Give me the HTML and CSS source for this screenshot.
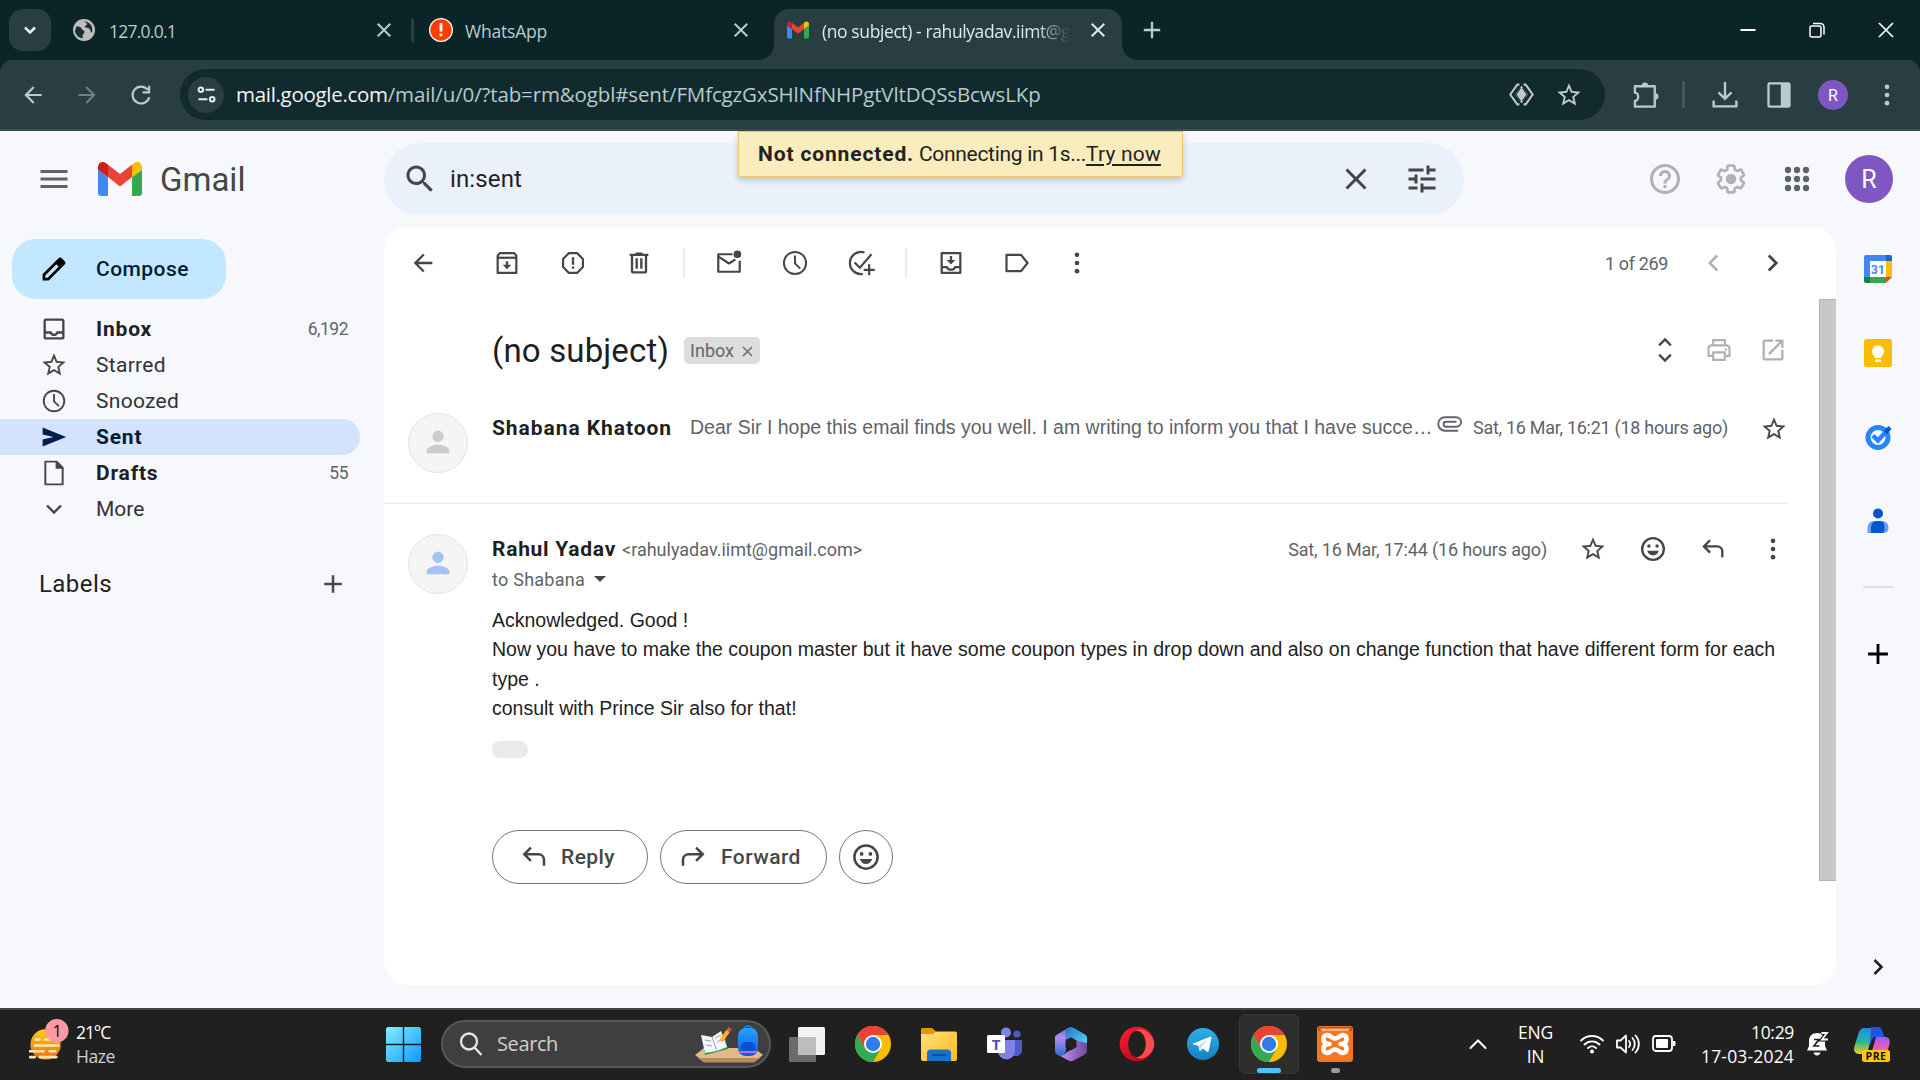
FILE: index.html
```html
<!DOCTYPE html>
<html lang="en">
<head>
<meta charset="utf-8">
<title>(no subject) - rahulyadav.iimt@gmail.com - Gmail</title>
<link rel="stylesheet" href="styles.css">
</head>
<body>
<svg class="defs" width="0" height="0">
  <defs>
    <linearGradient id="gWin" x1="0" y1="0" x2="1" y2="1"><stop offset="0" stop-color="#7ff0ff"/><stop offset="1" stop-color="#0f97ff"/></linearGradient>
    <linearGradient id="gSun" x1="0" y1="0" x2="0" y2="1"><stop offset="0" stop-color="#ffcf1a"/><stop offset="1" stop-color="#ee6a0c"/></linearGradient>
    <linearGradient id="gBag" x1="0" y1="0" x2="0" y2="1"><stop offset="0" stop-color="#25a5ff"/><stop offset="1" stop-color="#0a5be0"/></linearGradient>
    <linearGradient id="gFold" x1="0" y1="0" x2="1" y2="1"><stop offset="0" stop-color="#ffe07a"/><stop offset="1" stop-color="#fcbc1c"/></linearGradient>
    <linearGradient id="gM1" x1="0" y1="0" x2="0" y2="1"><stop offset="0" stop-color="#5a6fd0"/><stop offset=".35" stop-color="#b58ae8"/><stop offset="1" stop-color="#2f6fd6"/></linearGradient>
    <linearGradient id="gM2" x1="0" y1="0" x2="1" y2="1"><stop offset="0" stop-color="#2a6fc8"/><stop offset="1" stop-color="#50e0ff"/></linearGradient>
    <linearGradient id="gM3" x1="0" y1="0" x2="1" y2="0"><stop offset="0" stop-color="#c993f2"/><stop offset="1" stop-color="#6d4a9c"/></linearGradient>
    <linearGradient id="gOp" x1="0" y1="0" x2="1" y2="1"><stop offset="0" stop-color="#ff2134"/><stop offset="1" stop-color="#a5000f"/></linearGradient>
    <linearGradient id="gTg" x1="0" y1="0" x2="0" y2="1"><stop offset="0" stop-color="#33aee6"/><stop offset="1" stop-color="#0f83c3"/></linearGradient>
    <linearGradient id="gCp1" x1="0" y1="0" x2="0" y2="1"><stop offset="0" stop-color="#1d8bf0"/><stop offset=".5" stop-color="#25b59a"/><stop offset="1" stop-color="#e6cf1e"/></linearGradient>
    <linearGradient id="gCp2" x1="0" y1="0" x2="0" y2="1"><stop offset="0" stop-color="#9b5cf6"/><stop offset=".6" stop-color="#f05ab4"/><stop offset="1" stop-color="#ff8a5a"/></linearGradient>
    <symbol id="menu" viewBox="0 0 24 24"><path d="M3 18h18v-2H3v2zm0-5h18v-2H3v2zm0-7v2h18V6H3z"/></symbol>
    <symbol id="search" viewBox="0 0 24 24"><path d="M15.5 14h-.79l-.28-.27C15.41 12.59 16 11.11 16 9.5 16 5.91 13.09 3 9.5 3S3 5.91 3 9.5 5.91 16 9.5 16c1.61 0 3.09-.59 4.23-1.57l.27.28v.79l5 4.99L20.49 19l-4.99-5zm-6 0C7.01 14 5 11.99 5 9.5S7.01 5 9.5 5 14 7.01 14 9.5 11.99 14 9.5 14z"/></symbol>
    <symbol id="close" viewBox="0 0 24 24"><path d="M19 6.41L17.59 5 12 10.59 6.41 5 5 6.41 10.59 12 5 17.59 6.41 19 12 13.41 17.59 19 19 17.59 13.41 12z"/></symbol>
    <symbol id="tune" viewBox="0 0 24 24"><path d="M3 17v2h6v-2H3zM3 5v2h10V5H3zm10 16v-2h8v-2h-8v-2h-2v6h2zM7 9v2H3v2h4v2h2V9H7zm14 4v-2H11v2h10zm-6-4h2V7h4V5h-4V3h-2v6z"/></symbol>
    <symbol id="help" viewBox="0 0 24 24"><path d="M11 18h2v-2h-2v2zm1-16C6.48 2 2 6.48 2 12s4.48 10 10 10 10-4.48 10-10S17.52 2 12 2zm0 18c-4.41 0-8-3.59-8-8s3.59-8 8-8 8 3.59 8 8-3.59 8-8 8zm0-14c-2.21 0-4 1.79-4 4h2c0-1.1.9-2 2-2s2 .9 2 2c0 2-3 1.75-3 5h2c0-2.25 3-2.5 3-5 0-2.21-1.79-4-4-4z"/></symbol>
    <symbol id="gear" viewBox="0 0 24 24"><path transform="translate(1.3 1.3) scale(.89)" fill="none" stroke="currentColor" stroke-width="2" stroke-linejoin="round" d="M19.43 12.98c.04-.32.07-.64.07-.98 0-.34-.03-.66-.07-.98l2.11-1.65c.19-.15.24-.42.12-.64l-2-3.46c-.09-.16-.26-.25-.44-.25-.06 0-.12.01-.17.03l-2.49 1c-.52-.4-1.08-.73-1.69-.98l-.38-2.65C14.46 2.18 14.25 2 14 2h-4c-.25 0-.46.18-.49.42l-.38 2.65c-.61.25-1.17.59-1.69.98l-2.49-1c-.06-.02-.12-.03-.18-.03-.17 0-.34.09-.43.25l-2 3.46c-.13.22-.07.49.12.64l2.11 1.65c-.04.32-.07.65-.07.98 0 .33.03.66.07.98l-2.11 1.65c-.19.15-.24.42-.12.64l2 3.46c.09.16.26.25.44.25.06 0 .12-.01.17-.03l2.49-1c.52.4 1.08.73 1.69.98l.38 2.65c.03.24.24.42.49.42h4c.25 0 .46-.18.49-.42l.38-2.65c.61-.25 1.17-.59 1.69-.98l2.49 1c.06.02.12.03.18.03.17 0 .34-.09.43-.25l2-3.46c.12-.22.07-.49-.12-.64l-2.11-1.65z"/><circle cx="12" cy="12" r="3.5"/></symbol>
    <symbol id="apps" viewBox="0 0 24 24"><circle cx="6" cy="6" r="2.1"/><circle cx="12" cy="6" r="2.1"/><circle cx="18" cy="6" r="2.1"/><circle cx="6" cy="12" r="2.1"/><circle cx="12" cy="12" r="2.1"/><circle cx="18" cy="12" r="2.1"/><circle cx="6" cy="18" r="2.1"/><circle cx="12" cy="18" r="2.1"/><circle cx="18" cy="18" r="2.1"/></symbol>
    <symbol id="star" viewBox="0 0 24 24"><path d="M22 9.24l-7.19-.62L12 2 9.19 8.63 2 9.24l5.46 4.73L5.82 21 12 17.27 18.18 21l-1.63-7.03L22 9.24zM12 15.4l-3.76 2.27 1-4.28-3.32-2.88 4.38-.38L12 6.1l1.71 4.04 4.38.38-3.32 2.88 1 4.28L12 15.4z"/></symbol>
    <symbol id="pencil" viewBox="0 0 24 24"><path fill-rule="evenodd" d="M21.200 5.300l-2.500-2.500c-.8-.8-2-.8-2.800 0L2.200 16.500V21.800h5.300L21.200 8.100c.8-.8.8-2 0-2.800zM6.500 19.500H4.500v-2L14 8l2 2z"/></symbol>
    <symbol id="inbox" viewBox="0 0 24 24"><path d="M19 3H5c-1.100 0-2 .9-2 2v14c0 1.100.9 2 2 2h14c1.100 0 2-.9 2-2V5c0-1.100-.9-2-2-2zm0 16H5v-3h3.560c.69 1.190 1.970 2 3.450 2s2.750-.81 3.450-2H19v3zm0-5h-4.990c0 1.100-.9 2-2 2s-2-.9-2-2H5V5h14v9z"/></symbol>
    <symbol id="clock" viewBox="0 0 24 24"><g fill="none" stroke="currentColor" stroke-width="1.700"><circle cx="12" cy="12" r="9.500"/><path d="M12 5.500v6.800l4.500 4.500"/></g></symbol>
    <symbol id="send" viewBox="0 0 24 24"><path d="M1.500 3.200v6.500L11.500 12l-10 2.300v6.500L23.200 12z"/></symbol>
    <symbol id="doc" viewBox="0 0 24 24"><path fill="none" stroke="currentColor" stroke-width="1.800" stroke-linejoin="round" d="M4 1.500h10.500l5.500 5.500v15.500H4z"/><path d="M13.500 1v7H21z"/></symbol>
    <symbol id="down" viewBox="0 0 24 24"><path fill="none" stroke="currentColor" stroke-width="2" d="M6 9l6 6 6-6"/></symbol>
    <symbol id="right" viewBox="0 0 24 24"><path fill="none" stroke="currentColor" stroke-width="2.200" d="M9 6l6 6-6 6"/></symbol>
    <symbol id="left" viewBox="0 0 24 24"><path fill="none" stroke="currentColor" stroke-width="2" d="M15 6l-6 6 6 6"/></symbol>
    <symbol id="plus" viewBox="0 0 24 24"><path d="M19 13h-6v6h-2v-6H5v-2h6V5h2v6h6v2z"/></symbol>
    <symbol id="back" viewBox="0 0 24 24"><path d="M20 11H7.830l5.590-5.590L12 4l-8 8 8 8 1.410-1.410L7.830 13H20v-2z"/></symbol>
    <symbol id="forward" viewBox="0 0 24 24"><path d="M12 4l-1.410 1.410L16.170 11H4v2h12.170l-5.580 5.590L12 20l8-8z"/></symbol>
    <symbol id="archive" viewBox="0 0 24 24"><g fill="none" stroke="currentColor" stroke-width="1.900" stroke-linejoin="round"><path d="M4 5.700L5.800 3.500h12.400L20 5.700V20.500H4z"/><path d="M4 7.500h16"/></g><path d="M11 10.500h2v3h2.700L12 17.300l-3.700-3.800H11z"/></symbol>
    <symbol id="spam" viewBox="0 0 24 24"><path fill="none" stroke="currentColor" stroke-width="1.900" stroke-linejoin="round" d="M8.500 3.500h7l5 5v7l-5 5h-7l-5-5v-7z"/><path d="M11 7h2v6.500h-2zM11 15h2v2h-2z"/></symbol>
    <symbol id="trash" viewBox="0 0 24 24"><path d="M15 4V3H9v1H4v2h1v13c0 1.100.9 2 2 2h10c1.100 0 2-.9 2-2V6h1V4h-5zm2 15H7V6h10v13zM9 8h2v9H9zm4 0h2v9h-2z"/></symbol>
    <symbol id="unread" viewBox="0 0 24 24"><g fill="none" stroke="currentColor" stroke-width="1.900" stroke-linejoin="round"><path d="M15 4.500H2.800v15h18.400V10"/><path d="M3 6.500L12 12.400l5.500-3.500"/></g><circle cx="19.200" cy="4.500" r="3.300"/></symbol>
    <symbol id="task" viewBox="0 0 24 24"><g fill="none" stroke="currentColor" stroke-width="1.900"><path d="M15 3A9.500 9.500 0 1 0 13.500 21.400"/><path d="M6.500 11.500l4.500 4.500L21 4.500"/><path d="M19 13v9.500M14.300 17.800h9.500"/></g></symbol>
    <symbol id="move" viewBox="0 0 24 24"><g fill="none" stroke="currentColor" stroke-width="1.900" stroke-linejoin="round"><path d="M4 3.500h16v17H4z"/><path d="M4 15.500h4.500c1 3 6 3 7 0H20"/></g><path d="M11 6h2v3.500h2.700L12 13.200 8.300 9.500H11z"/></symbol>
    <symbol id="label" viewBox="0 0 24 24"><path fill="none" stroke="currentColor" stroke-width="1.900" stroke-linejoin="round" d="M3 5h12.500l5.500 7-5.500 7H3z"/></symbol>
    <symbol id="more" viewBox="0 0 24 24"><circle cx="12" cy="5" r="2"/><circle cx="12" cy="12" r="2"/><circle cx="12" cy="19" r="2"/></symbol>
    <symbol id="unfold" viewBox="0 0 24 24"><path fill="none" stroke="currentColor" stroke-width="2" d="M7 8l5-5 5 5M7 16l5 5 5-5"/></symbol>
    <symbol id="print" viewBox="0 0 24 24"><g fill="none" stroke="currentColor" stroke-width="1.800"><path d="M7 8V3.500h10V8"/><path d="M6.500 17H3v-6c0-1.700 1-3 2.700-3h12.600C20 8 21 9.300 21 11v6h-3.500"/><path d="M7 14h10v6.500H7z"/></g><circle cx="18" cy="11.500" r="1"/></symbol>
    <symbol id="open" viewBox="0 0 24 24"><path d="M19 19H5V5h7V3H5c-1.110 0-2 .9-2 2v14c0 1.100.89 2 2 2h14c1.100 0 2-.9 2-2v-7h-2v7zM14 3v2h3.590l-9.830 9.830 1.410 1.410L19 6.410V10h2V3h-7z"/></symbol>
    <symbol id="clip" viewBox="0 0 24 24"><path fill="none" stroke="currentColor" stroke-width="1.700" stroke-linecap="round" d="M19 17.500H8A6 6 0 0 1 8 5.500h10a4.200 4.200 0 0 1 0 8.500H9a2.200 2.200 0 0 1 0-4.500h8.500"/></symbol>
    <symbol id="reply" viewBox="0 0 24 24"><path fill="none" stroke="currentColor" stroke-width="2" d="M9.500 4.500L4.200 9.800l5.300 5.300M4.200 9.800h11.300c2.600 0 4.500 1.800 4.500 4.400V19"/></symbol>
    <symbol id="smile" viewBox="0 0 24 24"><circle cx="12" cy="12" r="9.300" fill="none" stroke="currentColor" stroke-width="2"/><circle cx="8.500" cy="9.500" r="1.500"/><circle cx="15.500" cy="9.500" r="1.500"/><path d="M7 13.500h10c-.8 2.400-2.700 4-5 4s-4.200-1.600-5-4z"/></symbol>
    <symbol id="person" viewBox="0 0 24 24"><path d="M12 12c2.210 0 4-1.790 4-4s-1.790-4-4-4-4 1.790-4 4 1.790 4 4 4zm0 2c-2.670 0-8 1.340-8 4v2h16v-2c0-2.660-5.330-4-8-4z"/></symbol>
    <symbol id="gmail" viewBox="0 0 44 34"><path fill="#4285f4" d="M0 8v23c0 1.700 1.300 3 3 3h7V15z"/><path fill="#34a853" d="M44 8v23c0 1.700-1.300 3-3 3h-7V15z"/><path fill="#c5221f" d="M0 5c0-4 4.500-6.300 7.800-4L10 2.700V15L0 8z"/><path fill="#fbbc04" d="M44 5c0-4-4.500-6.300-7.800-4L34 2.700V15l10-7z"/><path fill="#ea4335" d="M10 15V2.700L22 12 34 2.700V15L22 24.500z"/></symbol>
    <symbol id="chrome" viewBox="0 0 36 36"><circle cx="18" cy="18" r="18" fill="#fbbc05"/><path fill="#34a853" d="M2.400 9A18 18 0 0 0 18 36l7.800-13.500H10.200z"/><path fill="#ea4335" d="M2.400 9A18 18 0 0 1 33.600 9H18l-7.800 13.500z"/><circle cx="18" cy="18" r="9" fill="#fff"/><circle cx="18" cy="18" r="7.200" fill="#2f7de9"/></symbol>
  </defs>
</svg>

<div class="tabstrip">
  <div class="tab-search"><svg viewBox="0 0 24 24"><path fill="none" stroke="currentColor" stroke-width="3" d="M6 9l6 6 6-6"/></svg></div>
  <div class="tab tab-one">
    <svg class="fav" viewBox="0 0 24 24"><circle cx="12" cy="12" r="12" fill="#bdbdbd"/><path fill="#1b3033" d="M4 8c3 0 5 1 5.500 3 .5 1.500 3 1 3 3s-2 2-2 4.500V21C6 20.500 2.500 17 2.200 12.500zM12 2.500c1 1.500 3 1 3.200 3 .2 1.700-2.500 1.500-2.500 3 0 1.200 3.500.8 5 2.200s1.300 4 3 4.300C22.500 9 19 3 12 2.500z"/></svg>
    <span class="tab-title t-ip">127.0.0.1</span>
    <svg class="x"><use href="#close"/></svg>
  </div>
  <div class="tab-sep"></div>
  <div class="tab tab-two">
    <svg class="fav big" viewBox="0 0 24 24"><circle cx="12" cy="12" r="12" fill="#fff"/><circle cx="12" cy="12" r="10.700" fill="#ff3d00"/><path fill="#fff" d="M10.600 5h2.800v8.500h-2.800zM10.600 15.500h2.800v2.800h-2.800z"/></svg>
    <span class="tab-title t-wa">WhatsApp</span>
    <svg class="x"><use href="#close"/></svg>
  </div>
  <div class="tab tab-active">
    <svg class="fav-gm"><use href="#gmail"/></svg>
    <span class="tab-title t-gm">(no subject) - rahulyadav.iimt@g</span>
    <svg class="x"><use href="#close"/></svg>
  </div>
  <svg class="newtab"><use href="#plus"/></svg>
  <div class="winctl">
    <svg viewBox="0 0 16 16"><path d="M.5 8h15" stroke="#fff" stroke-width="2"/></svg>
    <svg viewBox="0 0 16 16"><g fill="none" stroke="#fff" stroke-width="1.500"><rect x="1" y="4" width="11" height="11" rx="2"/><path d="M4 1.500h7.500a3.500 3.500 0 0 1 3.500 3.500v7.500"/></g></svg>
    <svg viewBox="0 0 16 16"><path d="M1 1l14 14M15 1L1 15" stroke="#fff" stroke-width="1.700"/></svg>
  </div>
</div>

<div class="toolbar-wrap">
  <div class="toolbar">
    <svg class="nav"><use href="#back"/></svg>
    <svg class="nav dim"><use href="#forward"/></svg>
    <svg class="nav" viewBox="0 0 24 24"><path fill="none" stroke="currentColor" stroke-width="2" d="M18.200 7.200A7.800 7.800 0 1 0 19.600 14M19.500 3.500v6h-6"/></svg>
    <div class="omnibox">
      <div class="site"><svg viewBox="0 0 20 20"><g fill="none" stroke="currentColor" stroke-width="2.200"><circle cx="4" cy="5" r="2.400"/><path d="M9 5h9.500M1.500 15h9.500"/><circle cx="16" cy="15" r="2.400"/></g></svg></div>
      <span class="url"><b>mail.google.com</b>/mail/u/0/?tab=rm&amp;ogbl#sent/FMfcgzGxSHlNfNHPgtVltDQSsBcwsLKp</span>
      <svg class="omni-i" viewBox="0 0 24 24"><g fill="none" stroke="currentColor" stroke-width="2" stroke-linejoin="round"><path d="M10 2.500H8L1.200 12 8 21.500h2M14 2.500h2L22.800 12 16 21.500h-2"/></g><path d="M12 3.500l6.200 8.500-6.200 8.500L5.800 12z"/><path fill="none" stroke="#112a2e" stroke-width="1" d="M11 5.800L6.700 12l4.300 6.200M13 5.800l4.300 6.200-4.300 6.200"/></svg>
      <svg class="omni-i star-i"><use href="#star"/></svg>
    </div>
    <svg class="tb-i" viewBox="0 0 24 24"><path fill="none" stroke="currentColor" stroke-width="2" stroke-linejoin="round" d="M2.500 4.500h17V22h-17v-5c1.500 0 2.800-1.500 2.800-3.500S4 10 2.500 10z"/><path d="M8.300 4a2.800 2.800 0 0 1 5.600 0zM20 10.500a2.700 2.700 0 0 1 0 5.400z"/></svg>
    <i class="tb-sep"></i>
    <svg class="tb-i dl" viewBox="0 0 24 24"><path fill="none" stroke="currentColor" stroke-width="2.200" d="M12 0v15M6 9.500l6 6 6-6M1.500 17v5.500h21V17"/></svg>
    <svg class="tb-i" viewBox="0 0 24 24"><rect x="3" y="2" width="18" height="20" rx="1" fill="none" stroke="currentColor" stroke-width="2"/><path d="M13.500 2H21v20h-7.500z"/></svg>
    <span class="mini-av">R</span>
    <svg class="tb-i dots"><use href="#more"/></svg>
  </div>
</div>

<div class="app">
  <header class="head">
    <svg class="i36 c-grey menu"><use href="#menu"/></svg>
    <svg class="logo"><use href="#gmail"/></svg>
    <span class="brand">Gmail</span>
    <div class="searchbar">
      <svg class="i36"><use href="#search"/></svg>
      <span class="q">in:sent</span>
      <svg class="i36"><use href="#close"/></svg>
      <svg class="i36 tune"><use href="#tune"/></svg>
    </div>
    <div class="head-r">
      <svg class="i36 faded"><use href="#help"/></svg>
      <svg class="i36 faded"><use href="#gear"/></svg>
      <svg class="i36 c-grey"><use href="#apps"/></svg>
      <span class="avatar-r">R</span>
    </div>
    <div class="toast"><b>Not connected.</b><span>&nbsp;Connecting in 1s...</span><a>Try now</a></div>
  </header>

  <div class="body">
    <nav class="side">
      <div class="compose"><svg><use href="#pencil"/></svg><span>Compose</span></div>
      <ul>
        <li class="b"><svg><use href="#inbox"/></svg><span>Inbox</span><em>6,192</em></li>
        <li><svg><use href="#star"/></svg><span>Starred</span></li>
        <li><svg class="small"><use href="#clock"/></svg><span>Snoozed</span></li>
        <li class="b sel"><svg class="small"><use href="#send"/></svg><span>Sent</span></li>
        <li class="b"><svg class="small"><use href="#doc"/></svg><span>Drafts</span><em>55</em></li>
        <li><svg><use href="#down"/></svg><span class="plain">More</span></li>
      </ul>
      <div class="labels"><span>Labels</span><svg><use href="#plus"/></svg></div>
    </nav>

    <main class="card">
      <div class="tools">
        <svg class="s66"><use href="#back"/></svg>
        <svg class="s66 after-back"><use href="#archive"/></svg>
        <svg class="s66"><use href="#spam"/></svg>
        <svg class="s66"><use href="#trash"/></svg>
        <i class="vsep"></i>
        <svg class="s66"><use href="#unread"/></svg>
        <svg class="s66"><use href="#clock"/></svg>
        <svg class="s66"><use href="#task"/></svg>
        <i class="vsep"></i>
        <svg class="s66"><use href="#move"/></svg>
        <svg class="s66"><use href="#label"/></svg>
        <svg class="s54"><use href="#more"/></svg>
        <span class="count">1 of 269</span>
        <svg class="s59 faded"><use href="#left"/></svg>
        <svg class="s59"><use href="#right"/></svg>
      </div>
      <div class="scroll">
        <div class="content">
          <div class="subject">
            <h1>(no subject)</h1>
            <span class="chip"><span>Inbox</span><svg><use href="#close"/></svg></span>
            <div class="right-icons">
              <svg class="s54"><use href="#unfold"/></svg>
              <svg class="s54 faded"><use href="#print"/></svg>
              <svg class="s54 faded"><use href="#open"/></svg>
            </div>
          </div>
          <article class="msg m1">
            <div class="av"><svg><use href="#person"/></svg></div>
            <span class="name">Shabana Khatoon</span>
            <span class="snip">Dear Sir I hope this email finds you well. I am writing to inform you that I have succe…</span>
            <svg class="clip"><use href="#clip"/></svg>
            <span class="date">Sat, 16 Mar, 16:21 (18 hours ago)</span>
            <svg class="s60"><use href="#star"/></svg>
          </article>
          <article class="msg m2">
            <div class="av blue"><svg><use href="#person"/></svg></div>
            <div class="col">
              <div class="line">
                <span class="name">Rahul Yadav</span>
                <span class="mail">&lt;rahulyadav.iimt@gmail.com&gt;</span>
                <span class="date">Sat, 16 Mar, 17:44 (16 hours ago)</span>
                <svg class="s60"><use href="#star"/></svg>
                <svg class="s60"><use href="#smile"/></svg>
                <svg class="s60"><use href="#reply"/></svg>
                <svg class="s60"><use href="#more"/></svg>
              </div>
              <div class="to"><span>to Shabana</span><i></i></div>
              <p>Acknowledged. Good !<br>Now you have to make the coupon master but it have some coupon types in drop down and also on change function that have different form for each type .<br>consult with Prince Sir also for that!</p>
              <div class="trim"></div>
              <div class="actions">
                <button class="reply"><svg><use href="#reply"/></svg><span>Reply</span></button>
                <button class="fwd"><svg class="flip"><use href="#reply"/></svg><span>Forward</span></button>
                <button class="emo"><svg><use href="#smile"/></svg></button>
              </div>
            </div>
          </article>
        </div>
        <div class="bar"></div>
      </div>
    </main>

    <aside class="rail">
      <svg viewBox="0 0 28 28"><path fill="#4285f4" d="M2 0h20v6H6v16H0V2a2 2 0 0 1 2-2z"/><path fill="#1967d2" d="M22 0h4a2 2 0 0 1 2 2v4h-6z"/><path fill="#fbbc04" d="M22 6h6v16h-6z"/><path fill="#fff" d="M6 6h16v16H6z"/><path fill="#34a853" d="M6 22h16v6H6z"/><path fill="#188038" d="M0 22h6v6H2a2 2 0 0 1-2-2z"/><path fill="#ea4335" d="M22 22h6l-6 6z"/><text x="14" y="18.500" text-anchor="middle" class="cal">31</text></svg>
      <svg viewBox="0 0 28 28"><rect width="28" height="28" rx="2.500" fill="#fbbc04"/><path fill="#fff" d="M14 6.500a6 6 0 0 0-3.300 11V19h6.600v-1.500A6 6 0 0 0 14 6.500zM11 20.500h6V23h-6z"/></svg>
      <svg viewBox="0 0 28 28"><circle cx="14" cy="14.500" r="10" fill="none" stroke="#2684fc" stroke-width="5"/><path fill="none" stroke="#2684fc" stroke-width="4.500" d="M9 12.500l5 5L24.500 6"/><path fill="#0057cc" d="M20 8l4.500-5 3 3-4.500 5z"/></svg>
      <svg viewBox="0 0 28 28"><circle cx="14" cy="6.500" r="5" fill="#0057cc"/><path fill="#669df6" d="M3.500 26v-4.500C3.500 17 6 14 10 14h8c4 0 6.500 3 6.500 6.500S23 26 19 26z"/><path fill="#0057cc" d="M7 26v-4.500C7 17 9 14 13 14h3c3.500 0 4.500 3 4.500 6.500S20 26 17 26z"/></svg>
      <i></i>
      <svg class="radd"><use href="#plus"/></svg>
      <svg class="rchev"><use href="#right"/></svg>
    </aside>
  </div>
</div>

<footer class="taskbar">
  <div class="weather">
    <svg viewBox="0 0 42 46"><circle cx="17" cy="26" r="15.500" fill="url(#gSun)"/><g stroke="#ffe9b0" stroke-width="2.600" stroke-linecap="round"><path d="M7 21h4M16 21h11M6 27h24M0 33h15M21 33h6M1 39h5M11 39h17"/></g><circle cx="28.500" cy="12" r="12" fill="#ff99a4"/><text x="29" y="18" text-anchor="middle" class="badge">1</text></svg>
    <div><span class="temp">21°C</span><span class="haze">Haze</span></div>
  </div>
  <svg class="win" viewBox="0 0 35 35"><path fill="url(#gWin)" d="M1.500 0H16.800v16.800H0V1.500zM18.200 0H33.500L35 1.500v15.300H18.200zM0 18.200h16.800V35H1.500L0 33.500zM18.200 18.200H35v15.300L33.500 35H18.200z"/></svg>
  <div class="tsearch">
    <svg class="tsi" viewBox="0 0 24 24"><g fill="none" stroke="#e6e6e6" stroke-width="2.300"><circle cx="10" cy="9.500" r="8"/><path d="M15.500 15.500l7 7.500"/></g></svg>
    <span>Search</span>
    <svg class="deco" viewBox="0 0 68 38"><path fill="#e2b98a" d="M0 30l9-7h50l9 7-9 7H9z"/><path fill="#b98b5e" d="M3 33l6 4.500h50l6-4.500z"/><path fill="#2b9a4a" d="M7 12l3 18 23-6-3-12z"/><path fill="#f4f6fb" d="M6 10l11 2 9-6 6 16-10 4-12 2z"/><path stroke="#9aa3b5" fill="none" d="M17 12l5 14M10 15l6 1M20 13l6-3M11 20l6 1M22 17l6-3"/><path stroke="#ffb02e" stroke-width="4" d="M26 16l7-10"/><path stroke="#f0503c" stroke-width="4" d="M33 6l2-3"/><path fill="none" stroke="#1479e8" stroke-width="2" d="M49 5a4 4 0 0 1 8 0"/><rect x="43" y="3" width="20" height="28" rx="8" fill="url(#gBag)"/><rect x="46" y="17" width="14" height="11" rx="5" fill="#0d4fcb"/><path stroke="#b46cf0" stroke-width="2" d="M45 27h16"/></svg>
  </div>
  <div class="tapps">
    <svg viewBox="0 0 36 36"><rect x="9" y="1" width="27" height="28" rx="1.500" fill="#f2f2f2"/><rect x="0" y="11" width="27" height="28" rx="1.500" fill="#6b6b6b"/><path fill="#bdbdbd" d="M9 11h18v18H9z"/></svg>
    <svg><use href="#chrome"/></svg>
    <svg viewBox="0 0 36 36"><path fill="#e09a00" d="M0 3.500C0 2.500.8 2 2 2h9l4 3.500-3 4H0z"/><path fill="url(#gFold)" d="M0 8h12l3-2.500h19c1.200 0 2 .8 2 2V33a2 2 0 0 1-2 2H2a2 2 0 0 1-2-2z"/><path fill="#1474ca" d="M6 35V27c0-2 1.400-3.500 3.500-3.500h17c2 0 3.500 1.500 3.500 3.500v8z"/><path stroke="#0b4f94" stroke-width="2" d="M11 29h14"/></svg>
    <svg viewBox="0 0 36 36"><circle cx="19" cy="6.500" r="5" fill="#7b83eb"/><circle cx="30" cy="8" r="3.600" fill="#5059c9"/><path fill="#5059c9" d="M24 14h11v10c0 4-3 6-6 6h-5z"/><path fill="#7b83eb" d="M10 14h18v11a8.500 8.500 0 0 1-17 0z"/><rect y="9" width="18" height="18" rx="1.500" fill="#fff"/><text x="9" y="23.500" text-anchor="middle" class="teams">T</text></svg>
    <svg viewBox="0 0 36 36"><path fill="url(#gM1)" d="M15 2L4 8.500C2.700 9.300 2 10.500 2 12v13c0 2.500 2.500 4.500 5 4.500 5 0 6-4 6-6V12c0-3 2-5 4-5z"/><path fill="url(#gM2)" d="M15.500 1.700c1.500-1 3.500-1 5 0L32 8.500c1.300.8 2 2 2 3.500v9L22.500 14 18 11.500 12.500 14V7c0-2.500 1-4.200 3-5.300z"/><path fill="url(#gM3)" d="M34 17v8c0 1.500-.7 2.700-2 3.500L20.500 34.500c-1.500 1-3.500 1-5 0L6 29.300c4 .7 6-1.300 8-3.300l9-4.500V14.500z"/><path fill="#202020" d="M18 11.500l5.500 3v6.500L18 24l-5.500-3v-6.500z"/></svg>
    <svg viewBox="0 0 36 36"><ellipse cx="18" cy="18" rx="17.300" ry="17.300" fill="url(#gOp)"/><path fill="#ff4b4b" d="M24 3.500c6 2 11.300 8 11.300 14.500S30 30 25 32c-3 1.200-6 .5-8-1 6-1 10-6 10-13S24 5 17 4.500c2-1 5-1.500 7-1z"/><ellipse cx="17.800" cy="18" rx="8.600" ry="13" fill="#202020"/></svg>
    <svg viewBox="0 0 36 36"><circle cx="18" cy="18" r="16" fill="url(#gTg)"/><path fill="#fff" d="M7.500 17.800l17.500-7c1-.3 1.600.2 1.400 1.300L23.700 25c-.2 1-.8 1.200-1.600.8l-4.300-3.200-2.200 2.200c-.5.500-1.100.3-1.200-.6l-1-4.500-5-1.200c-.9-.3-.9-.5-.9-.7z"/><path fill="#b5d9ee" d="M14 19.500l9-6-7 7.500-.6 3.500z"/></svg>
    <div class="tactive"><svg><use href="#chrome"/></svg><i></i></div>
    <div class="tidle"><svg viewBox="0 0 36 36"><rect width="36" height="36" rx="3" fill="#f37623"/><path fill="#b9571a" d="M1 1h34v4H1z"/><path fill="#ffb27a" d="M3 2.500h30L31 5H5z"/><g fill="none" stroke="#fff" stroke-width="4.600" stroke-linecap="round" stroke-linejoin="round"><path d="M12.500 18c-4 0-6-1.500-6-5s3-4.500 5.500-3.500c2.500 1 3 3 6 3s3.500-2 6-3c2.500-1 5.500 0 5.500 3.500s-2 5-6 5M12.500 18c-4 0-6 1.500-6 5s3 4.500 5.500 3.500c2.500-1 3-3 6-3s3.500 2 6 3c2.500 1 5.500 0 5.500-3.500s-2-5-6-5"/></g></svg><i></i></div>
  </div>
  <div class="tray">
    <svg class="tchev" viewBox="0 0 18 18"><path fill="none" stroke="#fff" stroke-width="2" stroke-linecap="round" d="M1.500 13L9 5.500l7.500 7.500"/></svg>
    <div class="lang"><span>ENG</span><span>IN</span></div>
    <svg class="ti" viewBox="0 0 24 24"><g fill="none" stroke="#fff" stroke-width="1.800" stroke-linecap="round"><path d="M1 8.500c6-6 16-6 22 0M4.500 12.500c4.200-4.200 10.800-4.200 15 0M8 16c2.300-2.300 5.700-2.300 8 0"/></g><circle cx="12" cy="19.500" r="2"/></svg>
    <svg class="ti" viewBox="0 0 24 24"><g fill="none" stroke="#fff" stroke-width="1.800" stroke-linecap="round" stroke-linejoin="round"><path d="M1 8.500h3.500L10 3.500v17l-5.500-5H1zM13 9c1.500 1.800 1.500 4.200 0 6M16.500 6c3 3.500 3 8.500 0 12M19.500 3.500c4.500 5 4.500 12 0 17"/></g></svg>
    <svg class="ti bat" viewBox="0 0 24 24"><rect x="1" y="4" width="19" height="15" rx="3" fill="none" stroke="#fff" stroke-width="1.800"/><rect x="4" y="7" width="12" height="9" rx="1"/><path d="M21 9h1.500a1 1 0 0 1 1 1v3a1 1 0 0 1-1 1H21z"/></svg>
    <div class="time"><span class="clock">10:29</span><span class="day">17-03-2024</span></div>
    <svg class="bell" viewBox="0 0 24 26"><path d="M11 2c5 0 8 3.500 8 8v5l2 4.500H1L3 15v-5c0-4.500 3-8 8-8zM7.500 21.500h7c-.5 2-1.800 3-3.500 3s-3-1-3.500-3z"/><path fill="none" stroke="#202020" stroke-width="4" d="M15 1.500h6l-5 7h6"/><path fill="none" stroke="#fff" stroke-width="1.800" d="M15.500 2h5.500l-5 6.500h6"/><path fill="none" stroke="#202020" stroke-width="1.700" d="M8 8.500h5l-5 6.500h5.500"/></svg>
    <svg class="cop" viewBox="0 0 36 36"><path fill="url(#gCp1)" d="M11 2h12c-3 1-4 3-5 7l-5 19H6c-5 0-7-3-5.500-8L4 9c1.200-4.500 3-7 7-7z"/><path fill="#1f55e0" d="M17 1h7c3 0 4 2 5 6l1.500 4H22c-2 0-3 1-4 3l-2 6z"/><path fill="url(#gCp2)" d="M22 11h9c4 0 5.500 3 4.500 7l-3 11H14c2 0 3-1 4-4z"/><rect x="8" y="24" width="28" height="12" rx="2.500" fill="#ffc800"/><text x="22" y="34" text-anchor="middle" class="pre">PRE</text></svg>
  </div>
</footer>
</body>
</html>
```

FILE: styles.css
```css
* { box-sizing: border-box; }
body { margin: 0; width: 1920px; height: 1080px; overflow: hidden; display: flex; flex-direction: column; background: #f6f8fc; font-family: Roboto, "Liberation Sans", sans-serif; font-size: 21px; color: #202124; }
.defs { position: absolute; }
svg { fill: currentColor; flex: none; display: block; }
span { white-space: nowrap; }
i { display: block; flex: none; }

/* Browser tabs */
.tabstrip { height: 60px; flex: none; background: #0b2427; display: flex; align-items: center; padding-left: 9px; font-family: "Open Sans", "Noto Sans", sans-serif; font-size: 17.5px; color: #b5cdd1; }
.tab-search { width: 42px; height: 42px; border-radius: 14px; background: #283e42; display: grid; place-items: center; color: #e4eef0; }
.tab-search svg { width: 20px; height: 20px; }
.tab { display: flex; align-items: center; }
.tab-one { margin-left: 22px; width: 323px; }
.fav { width: 22px; height: 22px; }
.fav.big { width: 24px; height: 24px; }
.tab .x { width: 24px; height: 24px; margin-left: auto; }
.tab-title { margin-left: 14px; line-height: 24px; padding-top: 2px; }
.t-ip { letter-spacing: -.76px; }
.t-wa { letter-spacing: -.21px; }
.tab-sep { width: 3px; height: 24px; border-radius: 1px; background: #283e42; margin-left: 15px; }
.tab-two { margin-left: 15px; width: 324px; }
.tab-two .tab-title { margin-left: 12px; }
.tab-active { position: relative; margin-left: 21px; width: 348px; height: 51px; align-self: flex-end; background: #283e42; border-radius: 15px 15px 0 0; padding: 0 12px 9px 13px; color: #dfe9eb; }
.tab-active::before, .tab-active::after { content: ""; position: absolute; bottom: 0; width: 15px; height: 15px; }
.tab-active::before { left: -15px; background: radial-gradient(circle at 0 0, transparent 14.5px, #283e42 15px); }
.tab-active::after { right: -15px; background: radial-gradient(circle at 100% 0, transparent 14.5px, #283e42 15px); }
.fav-gm { width: 22px; height: 20px; }
.t-gm { margin-left: 13px; letter-spacing: -.4px; -webkit-mask-image: linear-gradient(90deg, #000 86%, transparent); mask-image: linear-gradient(90deg, #000 86%, transparent); }
.newtab { width: 28px; height: 28px; margin-left: 16px; }
.winctl { margin-left: auto; display: flex; gap: 53px; padding-right: 26px; }
.winctl svg { width: 16px; height: 16px; }

/* Browser toolbar */
.toolbar-wrap { flex: none; height: 71px; background: #0b2427; }
.toolbar { height: 71px; background: #283e42; border-radius: 12px 12px 0 0; border-bottom: 2px solid #3d4c50; display: flex; align-items: center; padding-left: 18px; color: #b5cdd1; }
.nav { width: 30px; height: 30px; margin: 1px 24px 0 0; padding: 2px; overflow: visible; }
.nav.dim { color: #6c8185; }
.omnibox { width: 1425px; height: 51px; border-radius: 26px; background: #112a2e; display: flex; align-items: center; padding-left: 8px; }
.site { width: 36px; height: 36px; border-radius: 50%; background: #283e42; display: grid; place-items: center; color: #e4eef0; }
.site svg { width: 19px; height: 19px; }
.url { margin: -2px 0 0 12px; font-family: "Open Sans", "Noto Sans", sans-serif; font-size: 20.5px; letter-spacing: -.13px; color: #b9c9cb; }
.url b { font-weight: 400; color: #f2f6f6; letter-spacing: -.3px; }
.omni-i { width: 25px; height: 25px; margin-left: auto; color: #c3c9ca; }
.star-i { width: 28px; height: 28px; margin: 0 22px 0 21px; }
.tb-i { width: 28px; height: 28px; margin-left: 27px; }
.tb-sep { width: 3px; height: 27px; background: #415a5f; margin-left: 22px; }
.tb-i.dl { width: 26px; height: 26px; margin-left: 27px; }
.mini-av { width: 30px; height: 30px; border-radius: 50%; background: #7e57c2; color: #fff; font-size: 16px; line-height: 31px; text-align: center; margin-left: 25px; }
.tb-i.dots { margin-left: 25px; }

/* Gmail header */
.app { flex: 1; display: flex; flex-direction: column; min-height: 0; }
.head { position: relative; height: 96px; flex: none; display: flex; align-items: center; padding-left: 36px; color: #444746; }
.i36 { width: 36px; height: 36px; }
.c-grey { color: #5f6368; }
.faded { color: #b0b1b3; }
.logo { width: 44px; height: 34px; margin-left: 26px; }
.brand { margin-left: 18px; font-size: 33px; width: 84px; }
.searchbar { width: 1080px; height: 72px; margin-left: 140px; border-radius: 36px; background: #eaf1fb; display: flex; align-items: center; padding-left: 18px; }
.q { margin-left: 12px; margin-right: auto; font-size: 24px; letter-spacing: .13px; color: #1f1f1f; }
.tune { margin: 0 24px 0 30px; }
.head-r { margin-left: auto; display: flex; align-items: center; gap: 30px; padding-right: 27px; }
.avatar-r { width: 48px; height: 48px; border-radius: 50%; background: #7e57c2; color: #fff; font-size: 25px; line-height: 49px; text-align: center; }
.toast { position: absolute; left: 738px; top: 0; width: 445px; height: 46px; background: #f9edbe; border: 1px solid #f0c36d; border-radius: 0 0 3px 3px; box-shadow: 0 3px 6px rgba(0,0,0,.2); padding-left: 19px; line-height: 44px; display: flex; color: #222; }
.toast b { font-weight: 700; letter-spacing: .86px; }
.toast span { letter-spacing: -.3px; }
.toast a { text-decoration: underline; text-underline-offset: 3px; white-space: nowrap; letter-spacing: .2px; }

/* Gmail sidebar */
.body { flex: 1; display: flex; min-height: 0; }
.side { width: 384px; flex: none; padding-top: 12px; }
.compose { margin-left: 12px; width: 214px; height: 60px; border-radius: 24px; background: #c2e7ff; display: flex; align-items: center; padding-left: 28px; gap: 28px; color: #001d35; font-weight: 500; letter-spacing: .47px; }
.compose svg { width: 28px; height: 28px; color: #000; }
.side ul { list-style: none; margin: 12px 0 0; padding: 0; }
.side li { height: 36px; width: 360px; display: flex; align-items: center; padding: 0 12px 0 40px; border-radius: 0 18px 18px 0; letter-spacing: .3px; color: #303236; }
.side li svg { width: 28px; height: 28px; margin-right: 28px; color: #444746; }
.side li svg.small { width: 26px; height: 26px; margin: 0 29px 0 1px; }
.side li .plain { letter-spacing: 0; }
.side li.b span { font-weight: 700; letter-spacing: .8px; color: #202124; }
.side em { margin-left: auto; font-style: normal; font-size: 17.5px; letter-spacing: -.5px; color: #5f6368; }
.side li.sel { background: #d3e3fd; }
.side li.sel span { color: #001d35; }
.side li.sel svg { color: #041e49; }
.labels { display: flex; align-items: center; justify-content: space-between; font-size: 24px; letter-spacing: .43px; margin-top: 39px; padding: 0 36px 0 39px; height: 36px; }
.labels svg { width: 30px; height: 30px; color: #444746; }

/* Conversation card */
.card { width: 1452px; height: 758px; background: #fff; border-radius: 24px; display: flex; flex-direction: column; overflow: hidden; color: #444746; }
.tools { height: 72px; flex: none; display: flex; align-items: center; padding-left: 6px; }
.s66 { width: 66px; height: 28px; }
.after-back { margin-left: 18px; }
.s54 { width: 54px; height: 28px; }
.s60 { width: 60px; height: 28px; }
.s59 { width: 59px; height: 30px; }
.vsep { width: 24px; height: 30px; background: linear-gradient(#e8eaed, #e8eaed) center / 2px 100% no-repeat; }
.count { margin-left: auto; margin-right: 16px; font-size: 18px; letter-spacing: -.37px; color: #5f6368; }
.tools .s59:last-child { margin-right: 34px; }
.scroll { flex: 1; display: flex; justify-content: space-between; }
.content { width: 1416px; }
.bar { width: 17px; height: 582px; background: #c8c8c8; border: 1px solid #b4b4b4; border-right: 0; }
.subject { display: flex; align-items: center; width: 1308px; height: 54px; margin: 24px 0 0 108px; }
.subject h1 { margin: 0; font-size: 33px; font-weight: 400; letter-spacing: .15px; color: #1f1f1f; white-space: nowrap; }
.chip { margin-left: 15px; width: 76px; height: 27px; border-radius: 5px; background: #ddd; color: #666; font-size: 18px; display: flex; align-items: center; padding-left: 6px; }
.chip svg { width: 17px; height: 17px; margin: 3px 0 0 5px; }
.right-icons { margin-left: auto; display: flex; }
.msg { display: flex; }
.av { width: 60px; height: 60px; flex: none; border-radius: 50%; background: #f5f5f5; border: 1px solid #e3e3e3; display: grid; place-items: center; margin-left: 24px; color: #ccc; }
.av svg { width: 34px; height: 34px; margin-top: -2px; }
.av.blue { color: #a4c2f4; border-color: #dfe4f0; }
.name { font-size: 21px; font-weight: 700; letter-spacing: .94px; color: #1f1f1f; }
.m1 { height: 127px; width: 1404px; padding-top: 36px; border-bottom: 1px solid #e9ebee; line-height: 30px; }
.m1 .name { margin-left: 24px; width: 180px; }
.snip { margin-left: 18px; width: 742px; margin-top: -1px; font-family: "Liberation Sans", Arial, sans-serif; font-size: 19.5px; color: #5f6368; }
.clip { width: 27px; height: 27px; margin: -2px 0 0 4px; color: #5f6368; }
.date { font-size: 18px; letter-spacing: -.28px; color: #5f6368; }
.m1 .date { margin-left: 10px; width: 255px; }
.m1 .s60 { margin: 2px 0 0 16px; }
.m2 { padding-top: 30px; }
.col { margin-left: 24px; width: 1311px; }
.line { display: flex; align-items: center; width: 1311px; height: 30px; }
.line .name { letter-spacing: .72px; }
.mail { margin-left: 6px; font-size: 18px; color: #5f6368; }
.line .date { margin-left: auto; margin-right: 16px; letter-spacing: -.16px; }
.to { display: flex; align-items: center; height: 30px; font-size: 18px; letter-spacing: .25px; color: #5f6368; }
.to i { border: 6px solid transparent; border-top-color: #444746; border-bottom: 0; margin-left: 9px; }
.col p { margin: 12px 0 0; font: 19.5px/29.25px "Liberation Sans", Arial, sans-serif; color: #222; }
.trim { width: 36px; height: 17px; border-radius: 8px; background: #e8eaed; margin-top: 18px; }
.actions { display: flex; margin-top: 72px; gap: 12px; }
.actions button { height: 54px; border: 1.5px solid #747775; border-radius: 27px; background: #fff; font: 500 21px Roboto, sans-serif; letter-spacing: .43px; color: #444746; display: flex; align-items: center; padding: 0; }
.actions svg { width: 30px; height: 30px; }
.reply { width: 156px; }
.reply svg { margin: 0 12px 0 26px; }
.fwd { width: 167px; }
.fwd svg { margin: 0 13px 0 17px; }
.flip { transform: scaleX(-1); }
.emo { width: 54px; }
.emo svg { margin: 0 auto; }

/* Side rail */
.rail { width: 84px; display: flex; flex-direction: column; align-items: center; padding-top: 28px; }
.rail > svg { width: 28px; height: 28px; margin-bottom: 56px; }
.rail i { width: 30px; height: 2px; background: #dfe1e5; margin: -5px 0 0; }
.rail > .radd { width: 34px; height: 34px; margin: 49px 0 0; color: #000; }
.rail > .rchev { margin: 282px 0 0; color: #1f1f1f; }
.cal { font: 700 12px Roboto, sans-serif; fill: #4285f4; }

/* Windows taskbar */
.taskbar { height: 72px; flex: none; background: #202020; border-top: 2px solid #434343; display: flex; align-items: center; font-family: "Open Sans", "Noto Sans", sans-serif; font-size: 17.5px; color: #fff; }
.weather { display: flex; width: 386px; padding-left: 29px; align-items: center; }
.weather svg { width: 41px; height: 45px; margin-top: -8px; }
.weather div { margin: -3px 0 0 6px; display: flex; flex-direction: column; line-height: 24px; }
.temp { letter-spacing: -1.1px; }
.haze { color: #cfcfcf; letter-spacing: -.42px; }
.badge { font: 17px "Open Sans", sans-serif; fill: #111; }
.win { width: 35px; height: 35px; margin-top: -1px; }
.tsearch { width: 330px; height: 48px; margin: -2px 0 0 20px; border-radius: 24px; background: #3f3f3f; border: 2px solid #575757; display: flex; align-items: center; padding-left: 16px; font-size: 20px; letter-spacing: -.39px; color: #d0d0d0; }
.tsi { width: 24px; height: 24px; }
.tsearch span { margin: -1px 0 0 14px; }
.deco { width: 68px; height: 38px; margin-left: auto; margin-right: 6px; }
.tapps { display: flex; align-items: center; margin: -2px 0 0 18px; gap: 30px; }
.tapps svg { width: 36px; height: 36px; }
.tactive { width: 60px; height: 60px; margin: 0 -12px; border-radius: 6px; background: #2d2d2d; border: 1px solid #383838; display: flex; flex-direction: column; align-items: center; padding-top: 11px; }
.tactive i { width: 24px; height: 5px; border-radius: 3px; background: #4cc2ff; margin-top: 6px; }
.tidle { height: 60px; display: flex; flex-direction: column; align-items: center; padding-top: 12px; }
.tidle i { width: 9px; height: 5px; border-radius: 3px; background: #9a9a9a; margin-top: 6px; }
.teams { font: 700 15px "Open Sans", sans-serif; fill: #4b53bc; }
.tray { margin: -2px 0 0 auto; display: flex; align-items: center; padding-right: 30px; }
.tchev { width: 18px; height: 18px; margin-right: 31px; }
.lang { width: 35px; display: flex; flex-direction: column; align-items: center; line-height: 24px; margin-right: 27px; letter-spacing: -.2px; }
.ti { width: 24px; height: 24px; margin-right: 12px; }
.ti.bat { margin-right: 25px; }
.time { width: 93px; display: flex; flex-direction: column; align-items: flex-end; line-height: 24px; margin-right: 12px; }
.clock { letter-spacing: -.33px; }
.day { letter-spacing: .17px; }
.bell { width: 24px; height: 26px; margin-right: 24px; }
.cop { width: 36px; height: 36px; }
.pre { font: 700 10.5px "Open Sans", sans-serif; fill: #111; letter-spacing: .5px; }
```
